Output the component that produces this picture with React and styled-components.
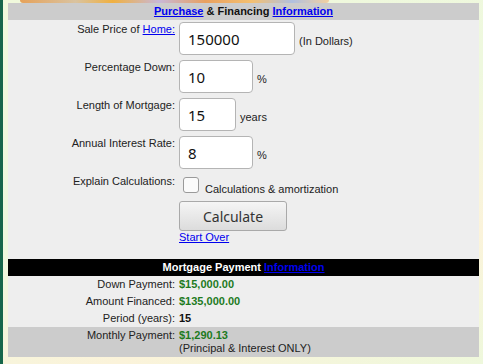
import React from 'react';
import styled, { createGlobalStyle } from 'styled-components';

const GlobalStyle = createGlobalStyle`
  html, body {
    margin: 0;
    padding: 0;
  }
  body {
    width: 483px;
    height: 364px;
    overflow: hidden;
    font-family: "Liberation Sans", Arial, sans-serif;
    background: linear-gradient(160deg, #f0f9dc 0%, #eef8de 45%, #fbf3da 75%, #eef8dc 100%);
  }
`;

const fields = [
  { label: 'Sale Price of', link: 'Home:', value: '150000', width: 116, suffix: '(In Dollars)' },
  { label: 'Percentage Down:', value: '10', width: 74, suffix: '%' },
  { label: 'Length of Mortgage:', value: '15', width: 57, suffix: 'years' },
  { label: 'Annual Interest Rate:', value: '8', width: 74, suffix: '%' },
];

const results = [
  { label: 'Down Payment:', value: '$15,000.00', green: true },
  { label: 'Amount Financed:', value: '$135,000.00', green: true },
  { label: 'Period (years):', value: '15' },
];

export default function App() {
  return (
    <Page>
      <GlobalStyle />
      <SideStripe />
      <Main>
        <Banner />
        <Panel>
          <SectionHeader>
            <Link href="#">Purchase</Link> &amp; Financing <Link href="#">Information</Link>
          </SectionHeader>

          <Form>
            {fields.map((f) => (
              <Row key={f.label}>
                <Label>
                  {f.label}
                  {f.link && <> <Link href="#">{f.link}</Link></>}
                </Label>
                <Field>
                  <Input defaultValue={f.value} $width={f.width} />
                  <Suffix>{f.suffix}</Suffix>
                </Field>
              </Row>
            ))}

            <Row>
              <Label>Explain Calculations:</Label>
              <Field>
                <Check type="checkbox" />
                <CheckText>Calculations &amp; amortization</CheckText>
              </Field>
            </Row>

            <Row>
              <span />
              <Actions>
                <Button type="button">Calculate</Button>
                <Link href="#">Start Over</Link>
              </Actions>
            </Row>
          </Form>

          <DarkHeader>
            Mortgage Payment <Link href="#">Information</Link>
          </DarkHeader>

          <Results>
            {results.map((r) => (
              <ResultRow key={r.label}>
                <ResultLabel>{r.label}</ResultLabel>
                <Value $green={r.green}>{r.value}</Value>
              </ResultRow>
            ))}
            <ResultRow $shaded>
              <ResultLabel>Monthly Payment:</ResultLabel>
              <div>
                <Value $green>$1,290.13</Value>
                <Note>(Principal &amp; Interest ONLY)</Note>
              </div>
            </ResultRow>
          </Results>
        </Panel>
      </Main>
    </Page>
  );
}

const Page = styled.div`
  display: flex;
  height: 364px;
`;

const SideStripe = styled.div`
  width: 3px;
  flex-shrink: 0;
  background: #16664a;
`;

const Main = styled.div`
  padding-left: 5px;
  width: 471px;
`;

const Banner = styled.div`
  height: 3px;
  margin: 0 150px 0 12px;
  border-radius: 0 0 40px 40px;
  background: linear-gradient(90deg, #e6a25a 0%, #d9c3a0 18%, #f0b040 30%, #c8b8d8 45%, #e8a060 60%, #f4c070 75%, #b0c0e0 88%, #f2d0a0 100%);
`;

const Panel = styled.div`
  width: 471px;
  background: #eeeeee;
  padding-bottom: 0;
`;

const SectionHeader = styled.div`
  height: 17px;
  line-height: 17px;
  background: #cccccc;
  text-align: center;
  font-size: 11px;
  font-weight: bold;
  color: #111;
`;

const Link = styled.a`
  color: #0000ee;
  text-decoration: underline;
`;

const Form = styled.div`
  padding-top: 2px;
  display: flex;
  flex-direction: column;
  gap: 5px;
`;

const Row = styled.div`
  display: grid;
  grid-template-columns: 171px 1fr;
`;

const Label = styled.div`
  text-align: right;
  padding-right: 4px;
  padding-top: 1px;
  font-size: 11px;
  line-height: 13px;
  color: #222;
`;

const Field = styled.div`
  display: flex;
  align-items: baseline;
  gap: 4px;
`;

const Input = styled.input`
  box-sizing: border-box;
  width: ${(p) => p.$width}px;
  height: 33px;
  padding: 0 8px;
  border: 1px solid #b4b4b4;
  border-radius: 4px;
  background: #fff;
  font-family: "Noto Sans", "Open Sans", sans-serif;
  font-size: 15px;
  color: #111;
  outline: none;
`;

const Suffix = styled.span`
  font-size: 11px;
  color: #222;
`;

const Check = styled.input`
  appearance: none;
  box-sizing: border-box;
  width: 16px;
  height: 16px;
  margin: 3px 0 0 4px;
  border: 1px solid #9a9a9a;
  border-radius: 3px;
  background: #fbfbfb;
  align-self: flex-start;
`;

const CheckText = styled.span`
  margin-top: 9px;
  margin-left: 2px;
  font-size: 11px;
  line-height: 13px;
  color: #222;
  align-self: flex-start;
`;

const Actions = styled.div`
  display: flex;
  flex-direction: column;
  align-items: flex-start;
  font-size: 11px;
  line-height: 13px;
`;

const Button = styled.button`
  box-sizing: border-box;
  width: 108px;
  height: 30px;
  border: 1px solid #a9a9a9;
  border-radius: 3px;
  background: linear-gradient(#f5f5f5, #dcdcdc);
  font-family: "Noto Sans", "Open Sans", sans-serif;
  font-size: 14px;
  color: #333;
  padding: 0;
`;

const DarkHeader = styled.div`
  margin-top: 15px;
  height: 17px;
  line-height: 17px;
  background: #000;
  color: #fff;
  text-align: center;
  font-size: 11px;
  font-weight: bold;
`;

const Results = styled.div`
  display: flex;
  flex-direction: column;
`;

const ResultRow = styled.div`
  display: grid;
  grid-template-columns: 171px 1fr;
  padding: 2px 0;
  background: ${(p) => (p.$shaded ? '#cccccc' : 'transparent')};
  font-size: 11px;
  line-height: 13px;
`;

const ResultLabel = styled.div`
  text-align: right;
  padding-right: 4px;
  color: #222;
`;

const Value = styled.div`
  font-weight: bold;
  color: ${(p) => (p.$green ? '#1e7b1e' : '#111')};
`;

const Note = styled.div`
  color: #222;
`;
